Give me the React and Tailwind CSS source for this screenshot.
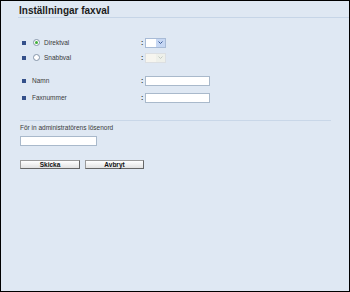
const FONT = "font-['Liberation_Sans',Arial,sans-serif]";

function Bullet() {
  return <span className="w-[4px] h-[4px] bg-[#34508a] shrink-0" />;
}

function Radio({ checked }) {
  return (
    <span className="w-[7px] h-[7px] rounded-full border border-[#8494a8] bg-white flex items-center justify-center shrink-0">
      {checked && <span className="w-[3px] h-[3px] rounded-full bg-[#3fae3a]" />}
    </span>
  );
}

function Select({ disabled }) {
  return (
    <div
      className={`w-[21px] h-[10px] flex border ${
        disabled ? "border-[#dcdfe2] bg-[#f6f5ef]" : "border-[#a8bbd6] bg-white"
      }`}
    >
      <div className="flex-1" />
      <div
        className={`w-[9px] flex items-center justify-center ${
          disabled ? "bg-[#eef0ea]" : "bg-[#c6d7f3]"
        }`}
      >
        <svg width="5" height="3" viewBox="0 0 5 3">
          <path
            d="M0.5 0.5 L2.5 2.5 L4.5 0.5"
            fill="none"
            stroke={disabled ? "#c4cbc2" : "#3a5a98"}
            strokeWidth="1"
          />
        </svg>
      </div>
    </div>
  );
}

function Row({ h, children, control }) {
  return (
    <div className={`flex items-center ${h}`}>
      <div className="w-[119px] flex items-center">
        <Bullet />
        {children}
      </div>
      <span className="w-[4px] text-[7px] leading-[8px] font-bold text-[#333]">:</span>
      {control}
    </div>
  );
}

export default function App() {
  return (
    <div className={`w-[350px] h-[292px] border border-black bg-[#dfe8f3] ${FONT} text-[#3a3a3a] overflow-hidden`}>
      {/* Title */}
      <div className="ml-[17px] mt-[4px] border-b border-[#c6d5e7]">
        <h1 className="pl-[1px] text-[10px] leading-[12px] font-bold text-[#1c1c1c]">
          Inställningar faxval
        </h1>
      </div>

      {/* Fax options */}
      <div className="pl-[21px] mt-[17px] text-[6.5px] leading-[8px]">
        <Row h="h-[15px]" control={<Select />}>
          <span className="ml-[7px]">
            <Radio checked />
          </span>
          <span className="ml-[4px]">Direktval</span>
        </Row>
        <Row h="h-[15px]" control={<Select disabled />}>
          <span className="ml-[7px]">
            <Radio />
          </span>
          <span className="ml-[4px]">Snabbval</span>
        </Row>

        <div className="mt-[7px]">
          <Row
            h="h-[17px]"
            control={<input className="w-[65px] h-[10px] bg-white border border-[#a9b9cb] outline-none" />}
          >
            <span className="ml-[6px]">Namn</span>
          </Row>
          <Row
            h="h-[17px]"
            control={<input className="w-[65px] h-[10px] bg-white border border-[#a9b9cb] outline-none" />}
          >
            <span className="ml-[6px]">Faxnummer</span>
          </Row>
        </div>
      </div>

      {/* Admin password */}
      <div className="ml-[19px] mr-[18px] mt-[14px] border-t border-[#c9d7e8]" />
      <div className="pl-[19px] text-[6.5px] leading-[8px]">
        <p className="mt-[3px]">För in administratörens lösenord</p>
        <input
          type="password"
          className="block mt-[4px] w-[77px] h-[10px] bg-white border border-[#a9b9cb] outline-none"
        />

        <div className="flex gap-[5px] mt-[14px]">
          <button className="w-[60px] h-[9px] flex items-center justify-center border border-[#9a9a9a] border-b-[#666] border-r-[#666] bg-gradient-to-b from-white to-[#e2e2e2] text-[6.5px] leading-[7px] font-bold text-[#111]">
            Skicka
          </button>
          <button className="w-[59px] h-[9px] flex items-center justify-center border border-[#9a9a9a] border-b-[#666] border-r-[#666] bg-gradient-to-b from-white to-[#e2e2e2] text-[6.5px] leading-[7px] font-bold text-[#111]">
            Avbryt
          </button>
        </div>
      </div>
    </div>
  );
}
